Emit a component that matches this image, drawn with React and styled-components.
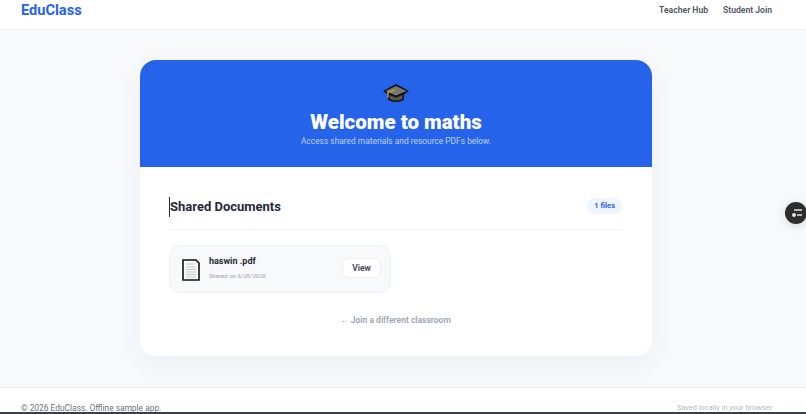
import styled, { createGlobalStyle } from 'styled-components';

const GlobalStyle = createGlobalStyle`
  html, body {
    margin: 0;
    height: 414px;
    overflow: hidden;
  }
  body {
    background: #f8f9fb;
    font-family: Roboto, "Noto Sans", sans-serif;
    color: #1f2937;
  }
`;

const Page = styled.div`
  height: 414px;
  display: flex;
  flex-direction: column;
  overflow: hidden;
`;

const Nav = styled.header`
  height: 29px;
  flex: none;
  background: #fff;
  border-bottom: 1px solid #f0f1f5;
  display: flex;
  justify-content: space-between;
  padding: 0 34px 0 21px;
`;

const Logo = styled.div`
  font-size: 14.6px;
  font-weight: 700;
  line-height: 21px;
  color: #2563eb;
`;

const NavLinks = styled.nav`
  display: flex;
  gap: 15px;
`;

const NavLink = styled.a`
  font-size: 8.6px;
  font-weight: 600;
  line-height: 20px;
  color: #4b5563;
`;

const Main = styled.main`
  height: 357px;
  flex: none;
  padding: 30px 14px 0 0;
  box-sizing: border-box;
  display: flex;
  justify-content: center;
  align-items: flex-start;
`;

const Card = styled.section`
  width: 512px;
  height: 296px;
  background: #fff;
  border-radius: 16px;
  overflow: hidden;
  box-shadow: 0 8px 28px rgba(30, 50, 90, 0.05);
`;

const Hero = styled.div`
  height: 107px;
  background: #2563eb;
  color: #fff;
  display: flex;
  flex-direction: column;
  align-items: center;
  padding-top: 23px;
  box-sizing: border-box;
`;

const CapIcon = styled.svg`
  width: 26px;
  height: 22px;
  display: block;
`;

const HeroTitle = styled.h1`
  margin: 4px 0 0;
  font-size: 20.5px;
  font-weight: 900;
  line-height: 26px;
`;

const HeroText = styled.p`
  margin: -1px 0 0;
  font-size: 8.4px;
  line-height: 14px;
  color: #bfd3fb;
`;

const Body = styled.div`
  padding: 0 30px 0 29px;
`;

const SectionHead = styled.div`
  height: 62px;
  border-bottom: 1px solid #f3f4f6;
  display: flex;
  align-items: center;
  justify-content: space-between;
`;

const SectionTitle = styled.h2`
  margin: 17px 0 0;
  font-size: 13px;
  font-weight: 700;
  line-height: 20px;
  color: #1f2937;
  border-left: 1px solid #1f2937;
`;

const Badge = styled.span`
  margin-top: 15px;
  height: 16px;
  padding: 0 7px;
  border-radius: 8px;
  background: #eff5ff;
  color: #2563eb;
  font-size: 7.5px;
  font-weight: 700;
  line-height: 16px;
`;

const DocGrid = styled.div`
  margin-top: 15px;
  width: 222px;
`;

const DocCard = styled.div`
  height: 48px;
  box-sizing: border-box;
  background: #f8f9fb;
  border: 1px solid #f0f1f4;
  border-radius: 10px;
  display: flex;
  align-items: center;
  padding: 0 9px 0 12px;
`;

const DocIcon = styled.svg`
  width: 18px;
  height: 22px;
  flex: none;
  margin-top: 2px;
`;

const DocInfo = styled.div`
  flex: 1;
  margin-left: 9px;
  margin-top: -3px;
`;

const DocName = styled.div`
  font-size: 9px;
  font-weight: 700;
  line-height: 13px;
  color: #1f2937;
`;

const DocDate = styled.div`
  margin-top: 3px;
  font-size: 6px;
  line-height: 9px;
  color: #9ca3af;
`;

const ViewButton = styled.button`
  width: 39px;
  height: 20px;
  padding: 0;
  margin-top: -2px;
  border: 1px solid #f0f1f4;
  border-radius: 8px;
  background: #fff;
  font-family: inherit;
  font-size: 8.5px;
  font-weight: 600;
  color: #374151;
`;

const BackLink = styled.a`
  display: block;
  margin-top: 20px;
  text-align: center;
  font-size: 8.5px;
  font-weight: 600;
  line-height: 14px;
  color: #9ca3af;
`;

const Footer = styled.footer`
  flex: 1;
  background: #fff;
  border-top: 1px solid #f0f1f5;
  display: flex;
  justify-content: space-between;
  padding: 14px 34px 0 21px;
`;

const Copy = styled.span`
  font-size: 8.4px;
  line-height: 13px;
  color: #6b7280;
`;

const Saved = styled.span`
  font-size: 7.4px;
  line-height: 11px;
  color: #b4b9c4;
`;

const FloatButton = styled.button`
  position: fixed;
  left: 785px;
  top: 202px;
  width: 22px;
  height: 22px;
  padding: 0 0 0 6px;
  border: 0;
  border-radius: 50%;
  background: #2d2d2d;
  box-shadow: 0 2px 10px rgba(0, 0, 0, 0.15);
  display: flex;
  align-items: center;
  box-sizing: border-box;
`;

const BottomEdge = styled.div`
  position: fixed;
  left: 0;
  right: 0;
  bottom: 0;
  height: 2px;
  background: #3a3f47;
`;

export default function App() {
  return (
    <Page>
      <GlobalStyle />
      <Nav>
        <Logo>EduClass</Logo>
        <NavLinks>
          <NavLink>Teacher Hub</NavLink>
          <NavLink>Student Join</NavLink>
        </NavLinks>
      </Nav>
      <Main>
        <Card>
          <Hero>
            <CapIcon viewBox="0 0 26 22">
              <path d="M13 1 L26 8 L21 11.5 V17 Q13 21 5 17 V11.5 L0 8 Z" fill="#111" />
              <path d="M13 3 L23.5 8 L13 12.5 L2.5 8 Z" fill="#77776f" />
              <path d="M6.5 12 L13 14.5 L19.5 12 V16 Q13 19 6.5 16 Z" fill="#55554f" />
              <path d="M12 7 L5 9.5 V14.5" fill="none" stroke="#e0a030" strokeWidth="1.3" />
            </CapIcon>
            <HeroTitle>Welcome to maths</HeroTitle>
            <HeroText>Access shared materials and resource PDFs below.</HeroText>
          </Hero>
          <Body>
            <SectionHead>
              <SectionTitle>Shared Documents</SectionTitle>
              <Badge>1 files</Badge>
            </SectionHead>
            <DocGrid>
              <DocCard>
                <DocIcon viewBox="0 0 18 22">
                  <path d="M1 1 H14 L17 4 V21 H1 Z" fill="#fafafa" stroke="#111" strokeWidth="1.6" />
                  <path d="M4 5 H12 M4 8 H14 M4 10.5 H14 M4 13 H14 M4 15.5 H14 M4 18 H14" stroke="#c4c4c4" strokeWidth="1" />
                </DocIcon>
                <DocInfo>
                  <DocName>haswin .pdf</DocName>
                  <DocDate>Shared on 6/28/2026</DocDate>
                </DocInfo>
                <ViewButton>View</ViewButton>
              </DocCard>
            </DocGrid>
            <BackLink>← Join a different classroom</BackLink>
          </Body>
        </Card>
      </Main>
      <Footer>
        <Copy>© 2026 EduClass. Offline sample app.</Copy>
        <Saved>Saved locally in your browser</Saved>
      </Footer>
      <FloatButton>
        <svg width="15" height="10" viewBox="0 0 15 10">
          <path d="M3 2 H11 M6 7 H11" stroke="#e5e5e5" strokeWidth="1.3" />
          <circle cx="3" cy="7" r="2" fill="#e5e5e5" />
        </svg>
      </FloatButton>
      <BottomEdge />
    </Page>
  );
}
